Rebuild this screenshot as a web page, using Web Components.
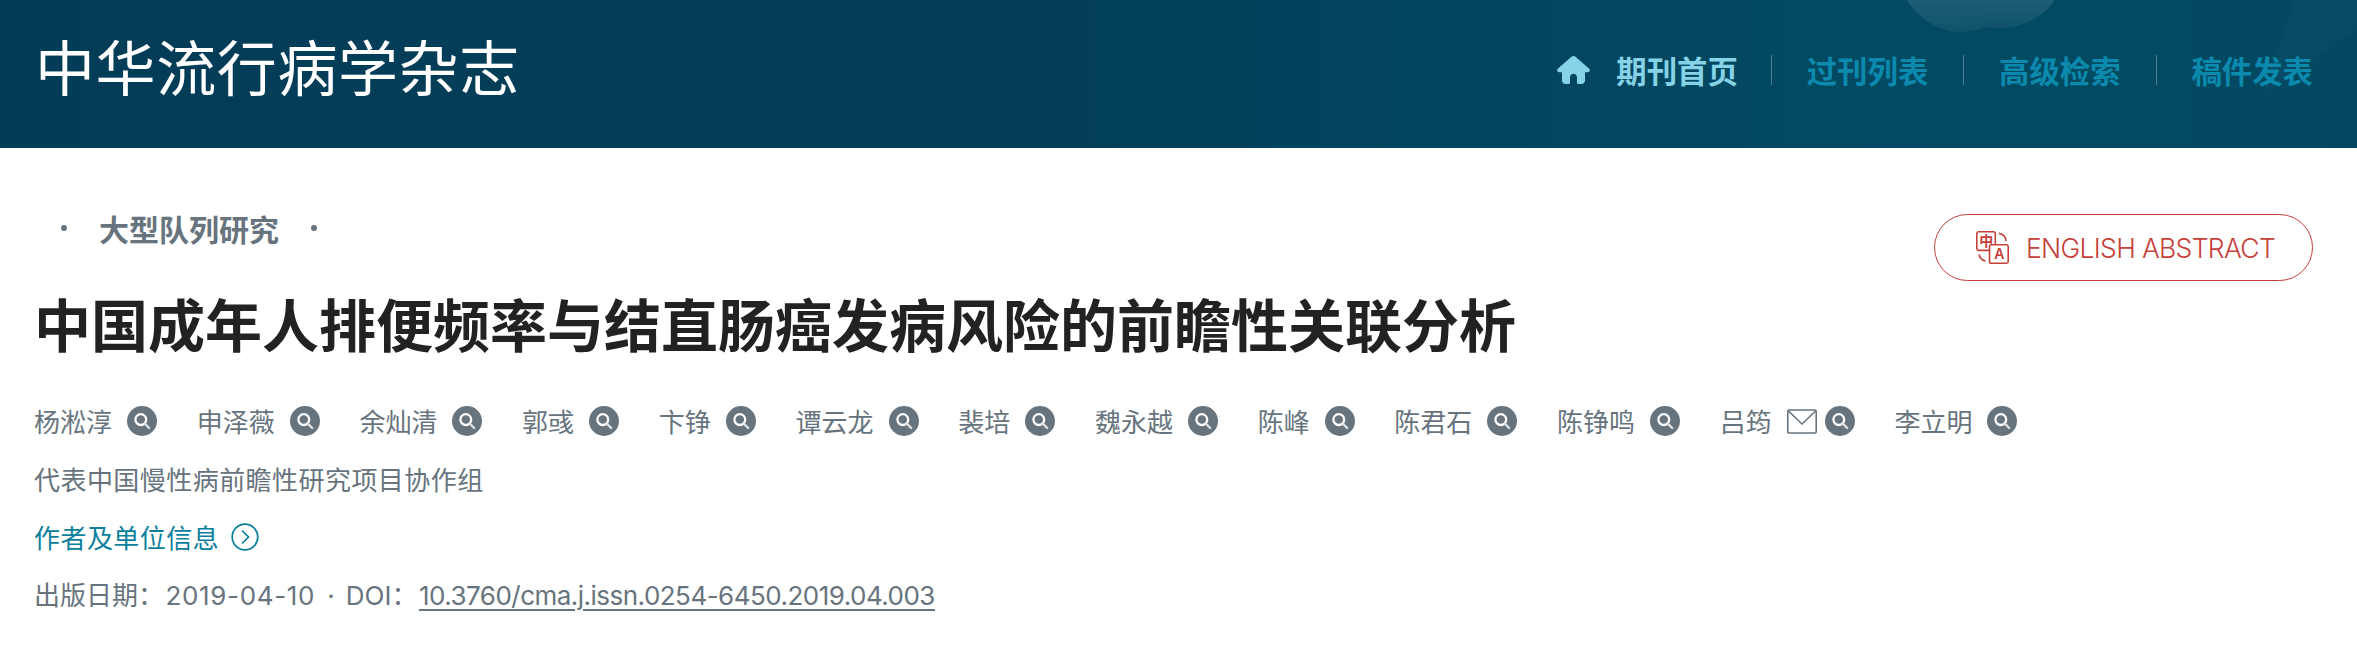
<!DOCTYPE html>
<html lang="zh">
<head>
<meta charset="utf-8">
<title>中华流行病学杂志</title>
<style>
html, body { margin: 0; padding: 0; background: #fff; }
body { font-family: Inter, "Noto Sans CJK SC", sans-serif; }
</style>
</head>
<body>
<journal-header title-text="中华流行病学杂志">
  <nav-link active home>期刊首页</nav-link>
  <nav-link>过刊列表</nav-link>
  <nav-link>高级检索</nav-link>
  <nav-link>稿件发表</nav-link>
</journal-header>
<article-head>
  <section-label slot="label">大型队列研究</section-label>
  <abstract-button slot="action">ENGLISH ABSTRACT</abstract-button>
  <h1 slot="title" style="margin:0;font:inherit">中国成年人排便频率与结直肠癌发病风险的前瞻性关联分析</h1>
  <author-list slot="authors">
    <author-chip>杨淞淳</author-chip>
    <author-chip>申泽薇</author-chip>
    <author-chip>余灿清</author-chip>
    <author-chip>郭彧</author-chip>
    <author-chip>卞铮</author-chip>
    <author-chip>谭云龙</author-chip>
    <author-chip>裴培</author-chip>
    <author-chip>魏永越</author-chip>
    <author-chip>陈峰</author-chip>
    <author-chip>陈君石</author-chip>
    <author-chip>陈铮鸣</author-chip>
    <author-chip mail>吕筠</author-chip>
    <author-chip>李立明</author-chip>
  </author-list>
  <span slot="group">代表中国慢性病前瞻性研究项目协作组</span>
  <info-link slot="info">作者及单位信息</info-link>
  <publish-line slot="publish" date="2019-04-10" doi="10.3760/cma.j.issn.0254-6450.2019.04.003"></publish-line>
</article-head>

<script>
class JournalHeader extends HTMLElement {
  constructor() {
    super();
    this.attachShadow({ mode: "open" });
    this.shadowRoot.innerHTML = `<style>
      :host {
        display: flex;
        position: relative;
        overflow: hidden;
        height: 148px;
        align-items: center;
        justify-content: space-between;
        padding: 0 44px 0 35px;
        background: linear-gradient(90deg, #033c56 0%, #033f59 45%, #024a63 80%, #024860 100%);
      }
      .deco { position: absolute; right: 0; top: 0; width: 500px; height: 148px; }
      .brand {
        position: relative;
        margin-top: -18px;
        font: 400 60px/70px "Noto Sans CJK SC", sans-serif;
        letter-spacing: .6px;
        color: #fff;
      }
      nav { position: relative; display: flex; align-items: center; margin-top: -9px; }
    </style>
    <svg class="deco" viewBox="0 0 500 148" aria-hidden="true">
      <defs>
        <linearGradient id="blob" x1="0" y1="0" x2="0" y2="1">
          <stop offset="0" stop-color="#fff" stop-opacity=".11"/>
          <stop offset="1" stop-color="#fff" stop-opacity=".05"/>
        </linearGradient>
      </defs>
      <path d="M50 0C62 20 84 32 103 32C118 32 124 28 130 27C158 32 188 18 197 0Z" fill="url(#blob)"/>
      <path d="M438 0C428 30 418 60 404 100C430 76 470 50 500 30V0Z" fill="#fff" fill-opacity=".02"/>
    </svg>
    <div class="brand"></div>
    <nav><slot></slot></nav>`;
  }

  connectedCallback() {
    this.shadowRoot.querySelector(".brand").textContent = this.getAttribute("title-text");
  }
}

class NavLink extends HTMLElement {
  constructor() {
    super();
    this.attachShadow({ mode: "open" });
    this.shadowRoot.innerHTML = `<style>
      :host {
        display: flex;
        align-items: center;
        height: 30px;
        padding: 0 34.9px;
        border-left: 1px solid rgba(255,255,255,.28);
        font: 700 30.4px/30px "Noto Sans CJK SC", sans-serif;
        color: #0b8aad;
      }
      :host([home]) { border-left: 0; padding: 0 33px 0 0; }
      :host(:last-child) { padding-right: 0; }
      :host([active]) { color: #86d2e6; }
      svg { display: none; width: 33px; height: 28px; margin-right: 26px; }
      :host([home]) svg { display: block; }
    </style>
    <svg viewBox="0 0 33 28" aria-hidden="true">
      <path fill="#86d2e6" d="M16.5 0C15.6 0 14.9.4 14.2 1L1 12.6C-.6 14 .2 16.3 2.3 16.3H5V24.5C5 26.4 6.4 28 8.4 28H11.4C12.3 28 13 27.3 13 26.4V21.4C13 19.3 14.5 17.8 16.5 17.8S20 19.3 20 21.4V26.4C20 27.3 20.7 28 21.6 28H24.6C26.6 28 28 26.4 28 24.5V16.3H30.7C32.8 16.3 33.6 14 32 12.6L18.8 1C18.1.4 17.4 0 16.5 0Z"/>
    </svg>
    <slot></slot>`;
  }
}

class ArticleHead extends HTMLElement {
  constructor() {
    super();
    this.attachShadow({ mode: "open" });
    this.shadowRoot.innerHTML = `<style>
      :host {
        display: block;
        padding: 66px 44px 0 34px;
        font: 400 26px/36px "Noto Sans CJK SC", sans-serif;
        color: #67747e;
      }
      .top { display: flex; justify-content: space-between; align-items: flex-start; height: 67px; }
      .title {
        margin-top: 11px;
        font: 700 57px/60px "Noto Sans CJK SC", sans-serif;
        color: #222;
      }
      .authors { margin-top: 53px; }
      .group { margin-top: 24px; letter-spacing: .45px; }
      .info { margin-top: 22px; }
      .publish { margin-top: 23px; }
    </style>
    <div class="top"><slot name="label"></slot><slot name="action"></slot></div>
    <div class="title"><slot name="title"></slot></div>
    <div class="authors"><slot name="authors"></slot></div>
    <div class="group"><slot name="group"></slot></div>
    <div class="info"><slot name="info"></slot></div>
    <div class="publish"><slot name="publish"></slot></div>`;
  }
}

class SectionLabel extends HTMLElement {
  constructor() {
    super();
    this.attachShadow({ mode: "open" });
    this.shadowRoot.innerHTML = `<style>
      :host {
        display: flex;
        align-items: center;
        gap: 32px;
        margin-left: 27px;
        margin-top: -3px;
        height: 34px;
        font: 700 30px/34px "Noto Sans CJK SC", sans-serif;
        color: #67747e;
      }
      i { width: 6px; height: 6px; border-radius: 50%; background: #67747e; }
    </style>
    <i></i><slot></slot><i></i>`;
  }
}

class AbstractButton extends HTMLElement {
  constructor() {
    super();
    this.attachShadow({ mode: "open" });
    this.shadowRoot.innerHTML = `<style>
      :host {
        display: flex;
        align-items: center;
        box-sizing: border-box;
        width: 379px;
        height: 67px;
        padding-left: 41px;
        gap: 17px;
        border: 1.5px solid #c6403a;
        border-radius: 34px;
        font: 300 26.5px/30px Inter, sans-serif;
        letter-spacing: -.68px;
        color: #c6403a;
        white-space: nowrap;
      }
      svg { width: 33px; height: 33px; flex: none; }
    </style>
    <svg viewBox="0 0 33 33" fill="none" stroke="#c6403a" stroke-width="1.6" aria-hidden="true">
      <path d="M2.5.8H17.5A1.8 1.8 0 0 1 19.3 2.6V17.6A1.8 1.8 0 0 1 17.5 19.4H2.5A1.8 1.8 0 0 1 .8 17.6V2.6A1.8 1.8 0 0 1 2.5.8Z"/>
      <path d="M15.3 13.8H30.5A1.8 1.8 0 0 1 32.2 15.6V30.4A1.8 1.8 0 0 1 30.5 32.2H15.3A1.8 1.8 0 0 1 13.5 30.4V15.6A1.8 1.8 0 0 1 15.3 13.8Z" fill="#fff"/>
      <path d="M23 2.4A8.5 8.5 0 0 1 30 10M3 23.5A8.5 8.5 0 0 0 9.5 30"/>
      <text x="10" y="15" text-anchor="middle" font-family="'Noto Sans CJK SC'" font-size="14" font-weight="700" fill="#c6403a" stroke="none">中</text>
      <text x="23" y="28.3" text-anchor="middle" font-family="Inter" font-size="14" font-weight="600" fill="#c6403a" stroke="none">A</text>
    </svg>
    <slot></slot>`;
  }
}

class AuthorList extends HTMLElement {
  constructor() {
    super();
    this.attachShadow({ mode: "open" });
    this.shadowRoot.innerHTML = `<style>
      :host { display: flex; gap: 39.7px; height: 32px; align-items: center; }
    </style><slot></slot>`;
  }
}

class AuthorChip extends HTMLElement {
  constructor() {
    super();
    this.attachShadow({ mode: "open" });
    this.shadowRoot.innerHTML = `<style>
      :host { display: flex; align-items: center; color: #67747e; white-space: nowrap; }
      .mail { display: none; width: 30px; height: 25px; margin-left: 15px; margin-right: -7px; }
      :host([mail]) .mail { display: block; }
      .find { width: 30px; height: 30px; margin-left: 15px; }
    </style>
    <slot></slot>
    <svg class="mail" viewBox="0 0 30 25" fill="none" stroke="#67747e" stroke-width="1.6" aria-hidden="true">
      <path d="M2 1H28A1.2 1.2 0 0 1 29.2 2.2V22.8A1.2 1.2 0 0 1 28 24H2A1.2 1.2 0 0 1 .8 22.8V2.2A1.2 1.2 0 0 1 2 1Z"/>
      <path d="M1.5 2L15 15L28.5 2"/>
    </svg>
    <svg class="find" viewBox="0 0 30 30" aria-hidden="true">
      <circle cx="15" cy="15" r="15" fill="#67747e"/>
      <circle cx="13.8" cy="13.6" r="5.4" fill="none" stroke="#fff" stroke-width="2.3"/>
      <path d="M17.8 17.6L22.2 22" stroke="#dfe3e6" stroke-width="2.3" stroke-linecap="round"/>
    </svg>`;
  }
}

class InfoLink extends HTMLElement {
  constructor() {
    super();
    this.attachShadow({ mode: "open" });
    this.shadowRoot.innerHTML = `<style>
      :host { display: flex; align-items: center; gap: 12px; color: #0b7f9c; letter-spacing: .45px; }
      svg { width: 28px; height: 28px; }
    </style>
    <slot></slot>
    <svg viewBox="0 0 28 28" fill="none" stroke="#0b7f9c" stroke-width="1.7" aria-hidden="true">
      <circle cx="14" cy="14" r="12.8"/>
      <path d="M11 7.5L17.5 14L11 20.5"/>
    </svg>`;
  }
}

class PublishLine extends HTMLElement {
  constructor() {
    super();
    this.attachShadow({ mode: "open" });
    this.shadowRoot.innerHTML = `<style>
      :host { display: block; color: #67747e; white-space: nowrap; font-family: Inter, "Noto Sans CJK SC", sans-serif; }
      .date { letter-spacing: .65px; margin-left: 1.5px; }
      .sep { letter-spacing: -1.2px; }
      u { letter-spacing: -.52px; margin-left: 1.5px; text-underline-offset: 4px; text-decoration-thickness: 1.5px; }
    </style>
    出版日期：<span class="date"></span><span class="sep"> &nbsp;·&nbsp; </span>DOI：<u class="doi"></u>`;
  }

  connectedCallback() {
    this.shadowRoot.querySelector(".date").textContent = this.getAttribute("date");
    this.shadowRoot.querySelector(".doi").textContent = this.getAttribute("doi");
  }
}

customElements.define("journal-header", JournalHeader);
customElements.define("nav-link", NavLink);
customElements.define("article-head", ArticleHead);
customElements.define("section-label", SectionLabel);
customElements.define("abstract-button", AbstractButton);
customElements.define("author-list", AuthorList);
customElements.define("author-chip", AuthorChip);
customElements.define("info-link", InfoLink);
customElements.define("publish-line", PublishLine);
</script>
</body>
</html>
